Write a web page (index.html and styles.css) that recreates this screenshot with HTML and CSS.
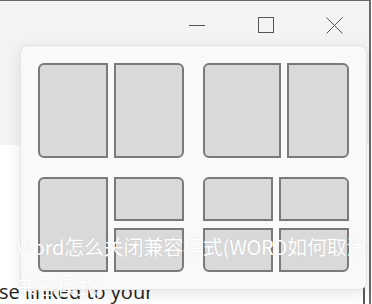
FILE: index.html
```html
<!DOCTYPE html>
<html>
<head>
<meta charset="utf-8">
<link rel="stylesheet" href="styles.css">
</head>
<body>
<div class="window">
  <div class="titlebar">
    <div class="tb-btn">
      <svg width="16" height="16" viewBox="0 0 16 16"><line x1="0" y1="8.5" x2="16" y2="8.5" stroke="#555" stroke-width="1"/></svg>
    </div>
    <div class="tb-btn">
      <svg width="16" height="16" viewBox="0 0 16 16"><rect x="0.5" y="0.5" width="15" height="15" fill="none" stroke="#555" stroke-width="1"/></svg>
    </div>
    <div class="tb-btn">
      <svg width="17" height="17" viewBox="0 0 17 17"><path d="M0.5 0.5 L16.5 16.5 M16.5 0.5 L0.5 16.5" stroke="#555" stroke-width="1"/></svg>
    </div>
  </div>
  <div class="doc">
    <p class="doc-text">se linked to your</p>
    <div class="doc-edge"></div>
  </div>
</div>

<div class="flyout">
  <div class="group g-two">
    <div class="tile r-l"></div>
    <div class="tile r-r"></div>
  </div>
  <div class="group g-wide">
    <div class="tile r-l"></div>
    <div class="tile r-r"></div>
  </div>
  <div class="group g-three">
    <div class="tile r-l tall"></div>
    <div class="tile r-tr"></div>
    <div class="tile r-br"></div>
  </div>
  <div class="group g-four">
    <div class="tile r-tl"></div>
    <div class="tile r-tr"></div>
    <div class="tile r-bl"></div>
    <div class="tile r-br"></div>
  </div>
</div>

<div class="caption">word怎么关闭兼容模式(WORD如何取消兼容模式)</div>
</body>
</html>
```

FILE: styles.css
```css
html, body {
  margin: 0;
  padding: 0;
}
body {
  width: 372px;
  height: 304px;
  overflow: hidden;
  position: relative;
  background: #ffffff;
  font-family: "Open Sans", "Noto Sans", sans-serif;
}
.window {
  height: 304px;
  width: 371px;
  box-sizing: border-box;
  border-top: 1px solid #6a6a6a;
  border-right: 2px solid #6a6a6a;
  display: flex;
  flex-direction: column;
}
.titlebar {
  height: 144px;
  background: #f3f3f3;
  display: flex;
  justify-content: flex-end;
  align-items: flex-start;
}
.tb-btn {
  width: 69px;
  height: 48px;
  display: flex;
  align-items: center;
  justify-content: center;
}
.doc {
  flex: 1;
  background: #ffffff;
  display: flex;
  align-items: flex-end;
}
.doc-text {
  margin: 0 0 0 -1px;
  font-size: 20px;
  line-height: 24px;
  color: #222;
}
.doc-edge {
  margin-left: auto;
  margin-right: 4px;
  width: 2px;
  height: 26px;
  background: #5a5a5a;
}
.flyout {
  position: absolute;
  left: 20px;
  top: 45px;
  width: 347px;
  height: 245px;
  box-sizing: border-box;
  padding: 17px;
  background: #f9f9f9;
  border: 1px solid #e4e4e4;
  border-radius: 8px;
  box-shadow: 0 4px 14px rgba(0,0,0,0.10);
  display: grid;
  grid-template-columns: 146px 146px;
  grid-template-rows: 95px 95px;
  column-gap: 19px;
  row-gap: 19px;
}
.group {
  display: grid;
  gap: 7px 6px;
}
.g-two {
  grid-template-columns: 70px 70px;
}
.g-wide {
  grid-template-columns: 78px 62px;
}
.g-three {
  grid-template-columns: 70px 70px;
  grid-template-rows: 44px 44px;
}
.g-four {
  grid-template-columns: 70px 70px;
  grid-template-rows: 44px 44px;
}
.tall {
  grid-row: 1 / span 2;
}
.tile {
  box-sizing: border-box;
  background: #d9d9d9;
  border: 2px solid #7a7a7a;
}
.r-l { border-radius: 6px 0 0 6px; }
.r-r { border-radius: 0 6px 6px 0; }
.r-tl { border-radius: 6px 0 0 0; }
.r-tr { border-radius: 0 6px 0 0; }
.r-bl { border-radius: 0 0 0 6px; }
.r-br { border-radius: 0 0 6px 0; }
.caption {
  position: absolute;
  left: 17px;
  top: 227px;
  width: 355px;
  font-family: "Noto Sans CJK SC", sans-serif;
  font-size: 20px;
  line-height: 40px;
  letter-spacing: -0.2px;
  color: #ffffff;
  text-shadow: 0 0 1px rgba(0,0,0,0.12);
}
```
